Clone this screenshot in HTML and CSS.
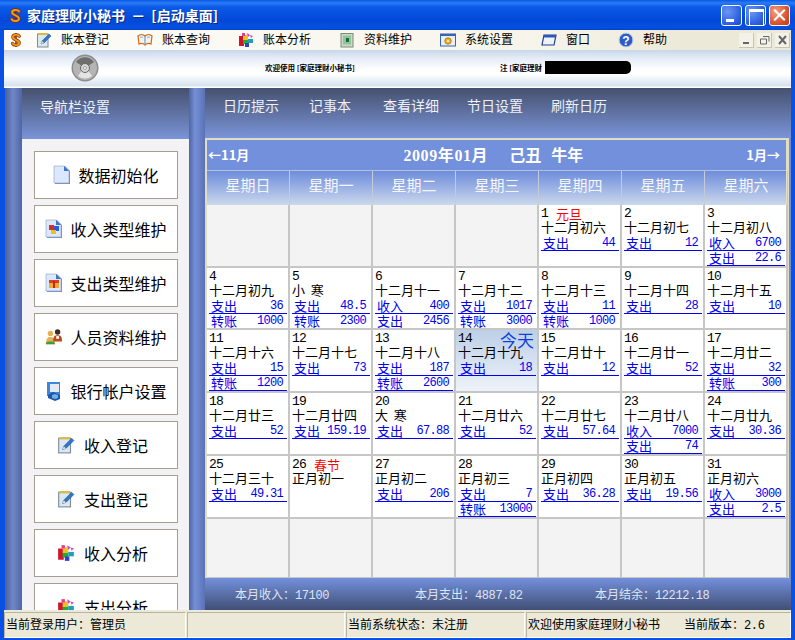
FILE: index.html
```html
<!DOCTYPE html>
<html lang="zh-CN">
<head>
<meta charset="utf-8">
<title>家庭理财小秘书</title>
<link rel="stylesheet" href="styles.css">
</head>
<body>
<svg class="defs" width="0" height="0" aria-hidden="true">
  <symbol id="i-logo" viewBox="0 0 16 20">
    <path d="M8 1v18" stroke="#7a2c00" stroke-width="2" fill="none"/>
    <path d="M12.5 5C11 2.5 4 2.5 3.8 6c-.2 4 8.7 3.5 8.5 8 -.2 3.6-7.5 3.6-9 .6" stroke="#8a3000" stroke-width="4.2" fill="none" stroke-linecap="round"/>
    <path d="M12.5 5C11 2.5 4 2.5 3.8 6c-.2 4 8.7 3.5 8.5 8 -.2 3.6-7.5 3.6-9 .6" stroke="#f59a1c" stroke-width="2.4" fill="none" stroke-linecap="round"/>
  </symbol>
  <symbol id="i-note" viewBox="0 0 16 16">
    <rect x="1.5" y="2" width="10.5" height="13" fill="#dbe8f2" stroke="#7d8c96"/>
    <path d="M2 2h10" stroke="#d9b84a" stroke-width="2"/>
    <path d="M5 12l1-3 7-7 2 2-7 7z" fill="#2f76cc" stroke="#1c4f96" stroke-width=".5"/>
    <path d="M5 12l1-3 2 2z" fill="#f3e3b0"/>
  </symbol>
  <symbol id="i-book" viewBox="0 0 16 16">
    <path d="M1 4c2-2 5-2 7 0 2-2 5-2 7 0l-1 8c-2-1-4-1-6 1-2-2-4-2-6-1z" fill="#f6f2e6" stroke="#d2691e" stroke-width="1.2"/>
    <path d="M8 4v9" stroke="#6f9bd6" stroke-width="1.2"/>
    <path d="M3 5.5c1-.5 2-.5 3 0M10 5.5c1-.5 2-.5 3 0" stroke="#7fa6d8" fill="none"/>
  </symbol>
  <symbol id="i-cube" viewBox="0 0 16 16">
    <rect x="1" y="4" width="5" height="10" fill="#d0142c"/>
    <rect x="5" y="3" width="5" height="5" fill="#f0c020"/>
    <rect x="5" y="8" width="5" height="4" fill="#20b030"/>
    <rect x="7" y="11" width="4" height="4" fill="#3040d0"/>
    <rect x="10" y="7" width="5" height="4" fill="#20a0b8"/>
    <path d="M9 1l3 2-2 2zM12 3l3 1-2 2z" fill="#d040c8"/>
    <rect x="4" y="1" width="3" height="3" fill="#e04090"/>
  </symbol>
  <symbol id="i-green" viewBox="0 0 16 16">
    <rect x="2" y="1.5" width="12" height="13.5" fill="#cfd8c8" stroke="#7c8a78"/>
    <rect x="4" y="3.5" width="8" height="9" fill="#8fc49a"/>
    <rect x="7" y="6" width="3" height="4" fill="#1d6a34"/>
  </symbol>
  <symbol id="i-gear" viewBox="0 0 16 16">
    <rect x=".5" y="2" width="15" height="12" fill="#e9eef7" stroke="#3a64b4"/>
    <rect x=".5" y="2" width="15" height="2" fill="#3a64b4"/>
    <circle cx="8" cy="9" r="3.2" fill="#efb520" stroke="#b9801a"/>
    <circle cx="8" cy="9" r="1" fill="#fff"/>
  </symbol>
  <symbol id="i-win" viewBox="0 0 16 16">
    <path d="M3 3h12l-2 10H1z" fill="#eef3fb" stroke="#1f3f8c" stroke-width="1.2"/>
    <path d="M3 3h12l-.5 2.5h-12z" fill="#2c58b8"/>
  </symbol>
  <symbol id="i-help" viewBox="0 0 16 16">
    <circle cx="8" cy="8" r="7" fill="#2c5cc8" stroke="#c9d4ea"/>
    <text x="8" y="12.5" text-anchor="middle" class="help-mark">?</text>
  </symbol>
  <symbol id="i-cd" viewBox="0 0 28 28">
    <circle cx="14" cy="14" r="13.5" fill="#8c8c8c"/>
    <circle cx="14" cy="14" r="12" fill="#b4b4b4"/>
    <path d="M5 8a11 11 0 0 1 18 0l-6 4h-6z" fill="#6e6e6e"/>
    <path d="M7 22a11 11 0 0 0 14 0l-5-7h-4z" fill="#e4e4e4"/>
    <circle cx="14" cy="14" r="4.5" fill="#d8d8d8" stroke="#666"/>
    <circle cx="14" cy="14" r="1.5" fill="#fff" stroke="#555" stroke-width=".5"/>
  </symbol>
  <symbol id="i-doc" viewBox="0 0 18 20">
    <path d="M2 1h10l5 5v13H2z" fill="#7d8fb8"/>
    <path d="M1 1h10l5 5v12H1z" fill="#dbe8fb" stroke="#8ca0c8" stroke-width=".6"/>
    <path d="M11 1l5 5h-5z" fill="#3f74c8"/>
  </symbol>
  <symbol id="i-doc-color" viewBox="0 0 18 20">
    <path d="M2 1h10l5 5v13H2z" fill="#7d8fb8"/>
    <path d="M1 1h10l5 5v12H1z" fill="#dbe8fb" stroke="#8ca0c8" stroke-width=".6"/>
    <path d="M11 1l5 5h-5z" fill="#3f74c8"/>
    <rect x="4" y="6" width="5" height="5" fill="#d82c2c"/>
    <rect x="9" y="7" width="5" height="5" fill="#2a5cd8"/>
    <rect x="6" y="11" width="5" height="4" fill="#f0c020"/>
  </symbol>
  <symbol id="i-doc-red" viewBox="0 0 18 20">
    <path d="M2 1h10l5 5v13H2z" fill="#7d8fb8"/>
    <path d="M1 1h10l5 5v12H1z" fill="#dbe8fb" stroke="#8ca0c8" stroke-width=".6"/>
    <path d="M11 1l5 5h-5z" fill="#3f74c8"/>
    <rect x="4" y="7" width="10" height="3" fill="#d8401c"/>
    <rect x="4" y="10" width="10" height="5" fill="#f0a830"/>
    <rect x="8" y="8" width="2" height="7" fill="#c0281c"/>
  </symbol>
  <symbol id="i-people" viewBox="0 0 20 20">
    <circle cx="6" cy="6" r="3" fill="#e8b050"/>
    <path d="M1 18c0-6 2-8 5-8s5 2 5 8z" fill="#e8b050"/>
    <path d="M1 18c0-2 1-3 5-3s5 1 5 3z" fill="#3c9c48"/>
    <circle cx="14" cy="4.5" r="3" fill="#3a2a20"/>
    <path d="M9 15c0-6 2-7 5-7s5 1 5 7z" fill="#b84a1c"/>
    <rect x="12.5" y="9" width="3" height="3" fill="#fff"/>
  </symbol>
  <symbol id="i-bank" viewBox="0 0 18 20">
    <rect x="2" y="1" width="13" height="14" fill="#3f86e0"/>
    <rect x="5" y="3" width="9" height="8" fill="#e3eaf4"/>
    <path d="M3 14l5-3 7 3v4l-5 2-7-3z" fill="#1f56a8"/>
    <path d="M7 14l3-1 3 1v3l-3 1-3-1z" fill="#6fb0e8"/>
  </symbol>
</svg>

<div class="win">
  <header class="titlebar">
    <svg class="title-logo"><use href="#i-logo"/></svg>
    <span class="title-text">家庭理财小秘书 － [启动桌面]</span>
    <div class="caption">
      <span class="cap cap-min"></span>
      <span class="cap cap-max"></span>
      <span class="cap cap-close"></span>
    </div>
  </header>

  <nav class="menu">
    <div class="menu-items">
      <svg class="menu-logo"><use href="#i-logo"/></svg>
      <span class="mi"><svg class="mi-ic"><use href="#i-note"/></svg>账本登记</span>
      <span class="mi"><svg class="mi-ic"><use href="#i-book"/></svg>账本查询</span>
      <span class="mi"><svg class="mi-ic"><use href="#i-cube"/></svg>账本分析</span>
      <span class="mi"><svg class="mi-ic"><use href="#i-green"/></svg>资料维护</span>
      <span class="mi"><svg class="mi-ic"><use href="#i-gear"/></svg>系统设置</span>
      <span class="mi"><svg class="mi-ic"><use href="#i-win"/></svg>窗口</span>
      <span class="mi"><svg class="mi-ic"><use href="#i-help"/></svg>帮助</span>
    </div>
    <div class="mdi">
      <span class="mdi-btn"><svg width="15" height="14"><path d="M4 10h6" stroke="#666" stroke-width="2"/></svg></span>
      <span class="mdi-btn"><svg width="15" height="14"><path d="M6 3.5h6v5M3.5 6h6v5h-6z" stroke="#666" fill="none"/></svg></span>
      <span class="mdi-btn"><svg width="15" height="14"><path d="M4 3l7 8M11 3l-7 8" stroke="#666" stroke-width="2"/></svg></span>
    </div>
  </nav>

  <div class="band">
    <svg class="cd"><use href="#i-cd"/></svg>
    <span class="tiny tiny-a">欢迎使用 [家庭理财小秘书]</span>
    <span class="tiny tiny-b">注 [家庭理财</span><span class="mask"></span>
  </div>

  <main class="main">
    <aside class="side">
      <div class="side-head">导航栏设置</div>
      <div class="side-body">
        <div class="nav-btn"><svg class="nav-ic"><use href="#i-doc"/></svg>数据初始化</div>
        <div class="nav-btn"><svg class="nav-ic"><use href="#i-doc-color"/></svg>收入类型维护</div>
        <div class="nav-btn"><svg class="nav-ic"><use href="#i-doc-red"/></svg>支出类型维护</div>
        <div class="nav-btn"><svg class="nav-ic"><use href="#i-people"/></svg>人员资料维护</div>
        <div class="nav-btn"><svg class="nav-ic"><use href="#i-bank"/></svg>银行帐户设置</div>
        <div class="nav-btn nav-btn-wide"><svg class="nav-ic"><use href="#i-note"/></svg>收入登记</div>
        <div class="nav-btn nav-btn-wide"><svg class="nav-ic"><use href="#i-note"/></svg>支出登记</div>
        <div class="nav-btn nav-btn-wide"><svg class="nav-ic"><use href="#i-cube"/></svg>收入分析</div>
        <div class="nav-btn nav-btn-wide"><svg class="nav-ic"><use href="#i-cube"/></svg>支出分析</div>
      </div>
    </aside>

    <section class="content">
      <div class="tabs">
        <span class="tab">日历提示</span>
        <span class="tab">记事本</span>
        <span class="tab">查看详细</span>
        <span class="tab">节日设置</span>
        <span class="tab">刷新日历</span>
      </div>
      <div class="cal">
        <div class="month">
          <span class="prev">←11月</span>
          <span class="month-title"><span class="ym">2009年01月</span><span class="gz">己丑 牛年</span></span>
          <span class="next">1月→</span>
        </div>
        <div class="weekdays">
          <span>星期日</span><span>星期一</span><span>星期二</span><span>星期三</span><span>星期四</span><span>星期五</span><span>星期六</span>
        </div>
        <div class="grid">
          <div class="day blank"></div><div class="day blank"></div><div class="day blank"></div><div class="day blank"></div>
          <div class="day"><div class="num">1<span class="fest">元旦</span></div><div class="lunar">十二月初六</div><a class="entry" href="#"><span>支出</span><b>44</b></a></div>
          <div class="day"><div class="num">2</div><div class="lunar">十二月初七</div><a class="entry" href="#"><span>支出</span><b>12</b></a></div>
          <div class="day"><div class="num">3</div><div class="lunar">十二月初八</div><a class="entry" href="#"><span>收入</span><b>6700</b></a><a class="entry" href="#"><span>支出</span><b>22.6</b></a></div>

          <div class="day"><div class="num">4</div><div class="lunar">十二月初九</div><a class="entry" href="#"><span>支出</span><b>36</b></a><a class="entry" href="#"><span>转账</span><b>1000</b></a></div>
          <div class="day"><div class="num">5</div><div class="lunar">小&nbsp;&nbsp;寒</div><a class="entry" href="#"><span>支出</span><b>48.5</b></a><a class="entry" href="#"><span>转账</span><b>2300</b></a></div>
          <div class="day"><div class="num">6</div><div class="lunar">十二月十一</div><a class="entry" href="#"><span>收入</span><b>400</b></a><a class="entry" href="#"><span>支出</span><b>2456</b></a></div>
          <div class="day"><div class="num">7</div><div class="lunar">十二月十二</div><a class="entry" href="#"><span>支出</span><b>1017</b></a><a class="entry" href="#"><span>转账</span><b>3000</b></a></div>
          <div class="day"><div class="num">8</div><div class="lunar">十二月十三</div><a class="entry" href="#"><span>支出</span><b>11</b></a><a class="entry" href="#"><span>转账</span><b>1000</b></a></div>
          <div class="day"><div class="num">9</div><div class="lunar">十二月十四</div><a class="entry" href="#"><span>支出</span><b>28</b></a></div>
          <div class="day"><div class="num">10</div><div class="lunar">十二月十五</div><a class="entry" href="#"><span>支出</span><b>10</b></a></div>

          <div class="day"><div class="num">11</div><div class="lunar">十二月十六</div><a class="entry" href="#"><span>支出</span><b>15</b></a><a class="entry" href="#"><span>转账</span><b>1200</b></a></div>
          <div class="day"><div class="num">12</div><div class="lunar">十二月十七</div><a class="entry" href="#"><span>支出</span><b>73</b></a></div>
          <div class="day"><div class="num">13</div><div class="lunar">十二月十八</div><a class="entry" href="#"><span>支出</span><b>187</b></a><a class="entry" href="#"><span>转账</span><b>2600</b></a></div>
          <div class="day today"><div class="num">14<span class="today-mark">今天</span></div><div class="lunar">十二月十九</div><a class="entry" href="#"><span>支出</span><b>18</b></a></div>
          <div class="day"><div class="num">15</div><div class="lunar">十二月廿十</div><a class="entry" href="#"><span>支出</span><b>12</b></a></div>
          <div class="day"><div class="num">16</div><div class="lunar">十二月廿一</div><a class="entry" href="#"><span>支出</span><b>52</b></a></div>
          <div class="day"><div class="num">17</div><div class="lunar">十二月廿二</div><a class="entry" href="#"><span>支出</span><b>32</b></a><a class="entry" href="#"><span>转账</span><b>300</b></a></div>

          <div class="day"><div class="num">18</div><div class="lunar">十二月廿三</div><a class="entry" href="#"><span>支出</span><b>52</b></a></div>
          <div class="day"><div class="num">19</div><div class="lunar">十二月廿四</div><a class="entry" href="#"><span>支出</span><b>159.19</b></a></div>
          <div class="day"><div class="num">20</div><div class="lunar">大&nbsp;&nbsp;寒</div><a class="entry" href="#"><span>支出</span><b>67.88</b></a></div>
          <div class="day"><div class="num">21</div><div class="lunar">十二月廿六</div><a class="entry" href="#"><span>支出</span><b>52</b></a></div>
          <div class="day"><div class="num">22</div><div class="lunar">十二月廿七</div><a class="entry" href="#"><span>支出</span><b>57.64</b></a></div>
          <div class="day"><div class="num">23</div><div class="lunar">十二月廿八</div><a class="entry" href="#"><span>收入</span><b>7000</b></a><a class="entry" href="#"><span>支出</span><b>74</b></a></div>
          <div class="day"><div class="num">24</div><div class="lunar">十二月廿九</div><a class="entry" href="#"><span>支出</span><b>30.36</b></a></div>

          <div class="day"><div class="num">25</div><div class="lunar">十二月三十</div><a class="entry" href="#"><span>支出</span><b>49.31</b></a></div>
          <div class="day"><div class="num">26<span class="fest">春节</span></div><div class="lunar">正月初一</div></div>
          <div class="day"><div class="num">27</div><div class="lunar">正月初二</div><a class="entry" href="#"><span>支出</span><b>206</b></a></div>
          <div class="day"><div class="num">28</div><div class="lunar">正月初三</div><a class="entry" href="#"><span>支出</span><b>7</b></a><a class="entry" href="#"><span>转账</span><b>13000</b></a></div>
          <div class="day"><div class="num">29</div><div class="lunar">正月初四</div><a class="entry" href="#"><span>支出</span><b>36.28</b></a></div>
          <div class="day"><div class="num">30</div><div class="lunar">正月初五</div><a class="entry" href="#"><span>支出</span><b>19.56</b></a></div>
          <div class="day"><div class="num">31</div><div class="lunar">正月初六</div><a class="entry" href="#"><span>收入</span><b>3000</b></a><a class="entry" href="#"><span>支出</span><b>2.5</b></a></div>

          <div class="day blank"></div><div class="day blank"></div><div class="day blank"></div><div class="day blank"></div><div class="day blank"></div><div class="day blank"></div><div class="day blank"></div>
        </div>
      </div>
      <div class="totals">
        <span>本月收入：<b>17100</b></span>
        <span>本月支出：<b>4887.82</b></span>
        <span>本月结余：<b>12212.18</b></span>
      </div>
    </section>
  </main>

  <footer class="status">
    <span class="pane pane-user">当前登录用户：管理员</span>
    <span class="pane pane-empty"></span>
    <span class="pane pane-state">当前系统状态：未注册</span>
    <span class="pane pane-ver"><span>欢迎使用家庭理财小秘书</span><span>当前版本：<b>2.6</b></span></span>
  </footer>
</div>
</body>
</html>
```
FILE: styles.css
```css
* { box-sizing: border-box; }
html, body { margin: 0; height: 100%; overflow: hidden; }
body { font-family: "Noto Sans CJK SC", "Liberation Sans", sans-serif; font-size: 12px; color: #000; }
svg { flex: none; }
.defs { position: absolute; }
.help-mark { font: bold 12px "Liberation Sans", sans-serif; fill: #fff; }

.win { width: 795px; height: 640px; display: flex; flex-direction: column; background: #0a50e4; padding-bottom: 4px; }

/* title bar */
.titlebar { height: 30px; flex: none; display: flex; align-items: center; padding-left: 9px; background: linear-gradient(#0a58e8 0, #2a7cf4 3px, #0a5ae8 7px, #0348d8 20px, #0550e0 28px, #0340c8 30px); }
.title-logo { width: 13px; height: 19px; margin-right: 5px; }
.title-text { color: #fff; font-weight: 700; font-size: 14px; line-height: 30px; text-shadow: 1px 1px 0 #0a2a80; white-space: pre; word-spacing: 3px; }
.caption { margin-left: auto; margin-right: 5px; display: flex; gap: 3px; }
.cap { width: 21px; height: 21px; border: 1px solid #fff; border-radius: 3px; position: relative; background: radial-gradient(circle at 30% 30%, #6b96f2, #2a5ce0 70%, #1c48c0); }
.cap-close { background: radial-gradient(circle at 30% 30%, #f0a088, #d8502c 65%, #b83c1c); }
.cap-min::after { content: ""; position: absolute; left: 4px; bottom: 3px; width: 8px; height: 3px; background: #fff; }
.cap-max::after { content: ""; position: absolute; left: 3px; top: 3px; width: 13px; height: 13px; border: 1px solid #fff; border-top-width: 3px; }
.cap-close::before, .cap-close::after { content: ""; position: absolute; left: 2px; top: 8px; width: 15px; height: 2px; background: #fff; transform: rotate(45deg); }
.cap-close::after { transform: rotate(-45deg); }

/* menu */
.menu { height: 20px; flex: none; margin: 0 4px; display: flex; background: #ece9d8; }
.menu-items { width: 679px; flex: none; display: flex; align-items: center; padding-left: 6px; background: linear-gradient(90deg, #fdfcf8, #f6f4ea 80%, #ece9d8); }
.menu-logo { width: 12px; height: 18px; margin-right: 14px; }
.mi { display: flex; align-items: center; gap: 9px; margin-right: 28px; padding-bottom: 3px; font-size: 12px; line-height: 16px; white-space: nowrap; flex: none; }
.mi:last-child { margin-right: 0; }
.mi-ic { width: 16px; height: 16px; margin-top: 2px; }
.mdi { margin-left: auto; display: flex; align-items: center; gap: 3px; padding-right: 1px; }
.mdi-btn { width: 15px; height: 15px; background: #f4f2e8; border-right: 1px solid #c8c4b0; border-bottom: 1px solid #c8c4b0; display: flex; }

/* info band */
.band { height: 38px; flex: none; margin: 0 4px; display: flex; align-items: center; padding: 0 0 3px 67px; background: linear-gradient(#c8d6ea 0, #e4ecf6 8px, #fff 20px, #fff 24px, #d6e2ee 36px, #fff 37px); }
.cd { width: 28px; height: 28px; margin-right: 166px; }
.tiny { font-size: 7.5px; font-weight: 700; white-space: pre; color: #000; }
.tiny-a { width: 235px; }
.tiny-b { width: 45px; }
.mask { width: 86px; height: 13px; background: #000; border-radius: 0 5px 5px 0; }

/* main */
.main { height: 522px; flex: none; margin: 0 4px 0 5px; display: flex; overflow: hidden; background: #5a74b8; }
.side { width: 200px; flex: none; padding: 0 16px 0 17px; display: flex; flex-direction: column; background: linear-gradient(90deg, #4a6098 0, #7088c8 8px, #4e66a4 17px, #4e66a4 184px, #7690d8 190px, #5a72b4 200px); overflow: hidden; }
.side-head { height: 51px; flex: none; padding: 9px 0 0 18px; color: #eef1f8; font-size: 14px; line-height: 18px; background: linear-gradient(#46516f, #7a94d8); }
.side-body { flex: 1; background: #f3f3f6; padding: 12px 11px 0 12px; display: flex; flex-direction: column; gap: 6px; overflow: hidden; }
.nav-btn { height: 48px; flex: none; background: #fff; border: 1px solid #a69e90; display: flex; align-items: center; justify-content: center; gap: 7px; font-size: 16px; white-space: nowrap; }
.nav-btn-wide { gap: 9px; padding-right: 7px; }
.nav-ic { width: 18px; height: 20px; }

/* right content */
.content { flex: 1; min-width: 0; display: flex; flex-direction: column; background: #6f8cd8; }
.tabs { height: 50px; flex: none; display: flex; gap: 28px; padding: 7px 0 0 18px; color: #eef1f8; font-size: 14px; line-height: 20px; background: linear-gradient(#46516f, #7a94d8); }
.tab:nth-child(1) { margin-right: 2px; }
.tab:nth-child(2) { margin-right: 4px; }
.cal { width: 584px; flex: none; height: 440px; border: 2px solid #e2dcc0; border-bottom-width: 1px; border-right-width: 3px; display: flex; flex-direction: column; background: #f3f3f3; }
.month { height: 31px; flex: none; display: flex; align-items: center; color: #fff; background: #7390dc; border-bottom: 1px solid #b6c2d8; padding: 0 6px 2px 1px; font-weight: 700; font-size: 13px; }
.month-title { flex: 1; display: flex; justify-content: center; padding-right: 9px; font-family: "Liberation Serif", "Noto Sans CJK SC", serif; font-size: 16px; white-space: pre; }
.ym { letter-spacing: .6px; margin-right: 21px; }
.gz { word-spacing: 6px; }
.weekdays { height: 34px; flex: none; display: grid; grid-template-columns: repeat(7, 83px); background: linear-gradient(#6d8cdc, #cbd8ec); color: #f4f6fb; font-size: 15px; line-height: 27px; text-align: center; }
.weekdays span { border-right: 1px solid #c4cad8; }
.grid { display: grid; grid-template-columns: repeat(7, 83px); grid-template-rows: 63px 62px 63px 63px 63px 60px; background: #f3f3f3; }
.day { background: #fff; border-right: 2px solid #c6c6c6; border-bottom: 2px solid #c6c6c6; padding: 2px 0 0 2px; overflow: hidden; }
.day.blank { background: #f3f3f3; }
.day.today { background: linear-gradient(#bcd0e6, #eef2fa); overflow: visible; }
.num { height: 14px; line-height: 14px; font-family: "Liberation Mono", monospace; font-size: 13px; letter-spacing: -.8px; display: flex; }
.fest { color: #f00; font-family: "Noto Sans CJK SC", sans-serif; font-size: 13px; letter-spacing: 0; margin-left: 8px; }
.today-mark { color: #1040e0; font-family: "Noto Sans CJK SC", sans-serif; font-size: 17px; letter-spacing: 0; line-height: 15px; margin-left: auto; padding-right: 3px; }
.lunar { height: 15px; line-height: 11px; font-size: 13px; white-space: pre; }
.entry { display: flex; justify-content: space-between; width: 78px; height: 15px; line-height: 14px; color: #0000f0; border-bottom: 1px solid #0000f0; text-decoration: none; font-size: 13px; padding: 0 4px 0 2px; }
.entry b { font-family: "Liberation Mono", monospace; font-weight: 400; font-size: 12px; letter-spacing: -.7px; line-height: 15px; }

/* totals */
.totals { flex: 1; display: grid; grid-template-columns: repeat(3, 180px); padding-left: 30px; align-items: center; color: #dfe4f2; font-size: 12px; background: linear-gradient(#7390dc, #414f75); }
.totals b { font-family: "Liberation Mono", monospace; font-weight: 400; font-size: 12px; letter-spacing: -.4px; }

/* status bar */
.status { flex: 1; margin: 0 4px; display: flex; background: #ece9d8; padding-top: 2px; gap: 1px; font-size: 12px; white-space: nowrap; }
.pane { border: 1px solid #b8b4a0; border-right-color: #fff; border-bottom-color: #fff; line-height: 22px; padding-left: 1px; overflow: hidden; }
.pane-user { width: 182px; }
.pane-empty { width: 158px; }
.pane-state { width: 179px; }
.pane-ver { flex: 1; display: flex; gap: 24px; }
.pane-ver b { font-family: "Liberation Mono", monospace; font-weight: 400; font-size: 12px; letter-spacing: -.4px; }
```
